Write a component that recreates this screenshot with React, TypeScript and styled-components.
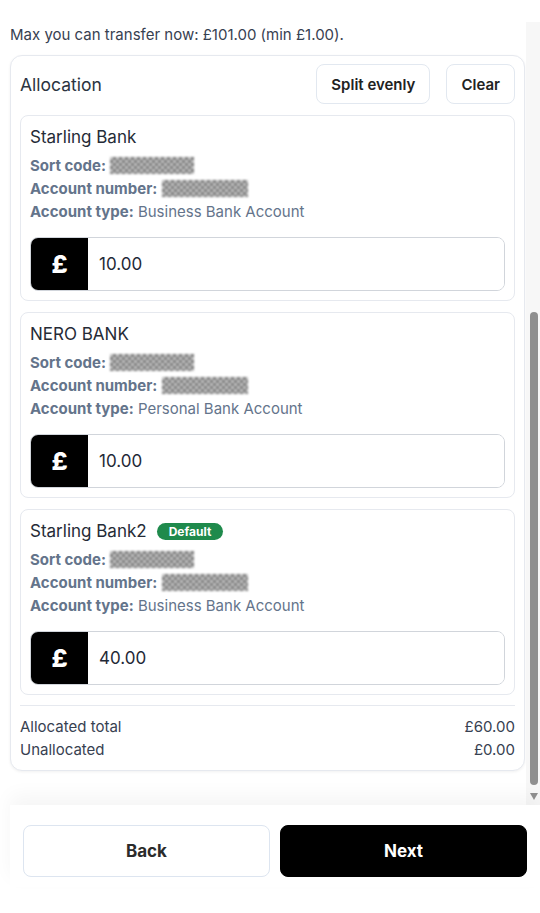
import React from 'react'
import styled, { createGlobalStyle } from 'styled-components'

type Account = {
  name: string
  type: string
  amount: string
  isDefault?: boolean
}

const accounts: Account[] = [
  { name: 'Starling Bank', type: 'Business Bank Account', amount: '10.00' },
  { name: 'NERO BANK', type: 'Personal Bank Account', amount: '10.00' },
  { name: 'Starling Bank2', type: 'Business Bank Account', amount: '40.00', isDefault: true },
]

const GlobalStyle = createGlobalStyle`
  * { box-sizing: border-box; }
  body {
    margin: 0;
    background: #ffffff;
    font-family: Inter, "Noto Sans", "Liberation Sans", sans-serif;
    color: #1f2937;
  }
`

export default function App(): React.ReactElement {
  return (
    <>
      <GlobalStyle />
      <Page>
        <ScrollFrame>
          <ScrollArea>
            <Intro>Max you can transfer now: £101.00 (min £1.00).</Intro>
            <AllocationCard>
              <HeaderRow>
                <HeaderTitle>Allocation</HeaderTitle>
                <HeaderActions>
                  <GhostButton>Split evenly</GhostButton>
                  <GhostButton>Clear</GhostButton>
                </HeaderActions>
              </HeaderRow>

              {accounts.map((acc) => (
                <BankCard key={acc.name}>
                  <BankName>
                    {acc.name}
                    {acc.isDefault && <DefaultBadge>Default</DefaultBadge>}
                  </BankName>
                  <DetailLine>
                    <DetailLabel>Sort code:</DetailLabel> <Redacted $width={84} />
                  </DetailLine>
                  <DetailLine>
                    <DetailLabel>Account number:</DetailLabel> <Redacted $width={86} />
                  </DetailLine>
                  <DetailLine>
                    <DetailLabel>Account type:</DetailLabel> {acc.type}
                  </DetailLine>
                  <AmountField>
                    <CurrencyBox>£</CurrencyBox>
                    <AmountInput defaultValue={acc.amount} />
                  </AmountField>
                </BankCard>
              ))}

              <Totals>
                <TotalRow>
                  <span>Allocated total</span>
                  <span>£60.00</span>
                </TotalRow>
                <TotalRow>
                  <span>Unallocated</span>
                  <span>£0.00</span>
                </TotalRow>
              </Totals>
            </AllocationCard>
          </ScrollArea>

          <ScrollTrack aria-hidden>
            <ScrollThumb />
            <ScrollArrow />
          </ScrollTrack>
        </ScrollFrame>

        <Footer>
          <FooterButton $primary={false}>Back</FooterButton>
          <FooterButton $primary>Next</FooterButton>
        </Footer>
      </Page>
    </>
  )
}

const Page = styled.div`
  height: 913px;
  padding-top: 22px;
  display: flex;
  flex-direction: column;
`

const ScrollFrame = styled.div`
  height: 783px;
  flex-shrink: 0;
  display: flex;
`

const ScrollArea = styled.div`
  flex: 1;
  overflow-y: auto;
  scrollbar-width: none;
  padding: 2px 1px 34px 10px;
`

const ScrollTrack = styled.div`
  width: 14px;
  background: #f7f7f7;
  display: flex;
  flex-direction: column;
  align-items: center;
  padding: 290px 0 0 1px;
`

const ScrollThumb = styled.div`
  width: 8px;
  height: 473px;
  border-radius: 4px;
  background: #8f8f8f;
`

const ScrollArrow = styled.div`
  margin-top: 8px;
  width: 0;
  height: 0;
  border-left: 4px solid transparent;
  border-right: 4px solid transparent;
  border-top: 7px solid #8f8f8f;
`

const Intro = styled.p`
  margin: 0 0 9px;
  font-size: 15px;
  line-height: 22px;
  color: #374151;
`

const AllocationCard = styled.section`
  border: 1px solid #e6e9ef;
  border-radius: 12px;
  padding: 8px 9px 9px;
  background: #ffffff;
  box-shadow: 0 1px 3px rgba(0, 0, 0, 0.06);
  display: flex;
  flex-direction: column;
  gap: 11px;
`

const HeaderRow = styled.div`
  display: flex;
  align-items: center;
  justify-content: space-between;
  height: 40px;
`

const HeaderTitle = styled.span`
  font-size: 17.5px;
  color: #2b3441;
`

const HeaderActions = styled.div`
  display: flex;
  gap: 16px;
`

const GhostButton = styled.button`
  height: 40px;
  padding: 0 14px;
  border: 1px solid #e2e8f0;
  border-radius: 8px;
  background: #ffffff;
  font-family: inherit;
  font-size: 15px;
  font-weight: 600;
  color: #222222;
`

const BankCard = styled.div`
  border: 1px solid #e6e9ef;
  border-radius: 8px;
  padding: 10px 9px 9px;
  display: flex;
  flex-direction: column;
`

const BankName = styled.div`
  display: flex;
  align-items: center;
  gap: 10px;
  font-size: 17px;
  line-height: 22px;
  color: #252b36;
  margin-bottom: 6px;
`

const DefaultBadge = styled.span`
  background: #1f8a4c;
  color: #ffffff;
  font-size: 12px;
  font-weight: 700;
  line-height: 17px;
  padding: 0 12px;
  border-radius: 999px;
`

const DetailLine = styled.div`
  font-size: 15px;
  line-height: 23px;
  color: #64748b;
`

const DetailLabel = styled.strong`
  font-weight: 700;
`

const Redacted = styled.span<{ $width: number }>`
  display: inline-block;
  vertical-align: -3px;
  width: ${({ $width }) => $width}px;
  height: 17px;
  background: repeating-conic-gradient(#7c7c7c 0 25%, #c2c2c2 0 50%) 0 0 / 6px 6px, #9e9e9e;
  filter: blur(1px);
`

const AmountField = styled.div`
  margin-top: 14px;
  height: 54px;
  display: flex;
  border: 1px solid #d1d5db;
  border-radius: 8px;
  overflow: hidden;
`

const CurrencyBox = styled.div`
  width: 57px;
  background: #000000;
  color: #ffffff;
  font-size: 25px;
  font-weight: 800;
  display: flex;
  align-items: center;
  justify-content: center;
`

const AmountInput = styled.input`
  flex: 1;
  border: none;
  outline: none;
  padding: 0 11px;
  font-family: inherit;
  font-size: 17px;
  color: #1f2937;
  background: #ffffff;
`

const Totals = styled.div`
  border-top: 1px solid #e6e9ef;
  padding-top: 9px;
  margin-top: -1px;
`

const TotalRow = styled.div`
  display: flex;
  justify-content: space-between;
  font-size: 15px;
  line-height: 23px;
  color: #374151;
`

const Footer = styled.div`
  margin-left: 10px;
  padding: 20px 13px 10px;
  display: flex;
  gap: 10px;
  background: #ffffff;
  box-shadow: 0 -10px 18px rgba(0, 0, 0, 0.04);
`

const FooterButton = styled.button<{ $primary: boolean }>`
  flex: 1;
  height: 52px;
  border-radius: 8px;
  border: 1px solid ${({ $primary }) => ($primary ? '#000000' : '#dde5f0')};
  background: ${({ $primary }) => ($primary ? '#000000' : '#ffffff')};
  color: ${({ $primary }) => ($primary ? '#ffffff' : '#2b2b2b')};
  font-family: inherit;
  font-size: 17px;
  font-weight: 700;
`
